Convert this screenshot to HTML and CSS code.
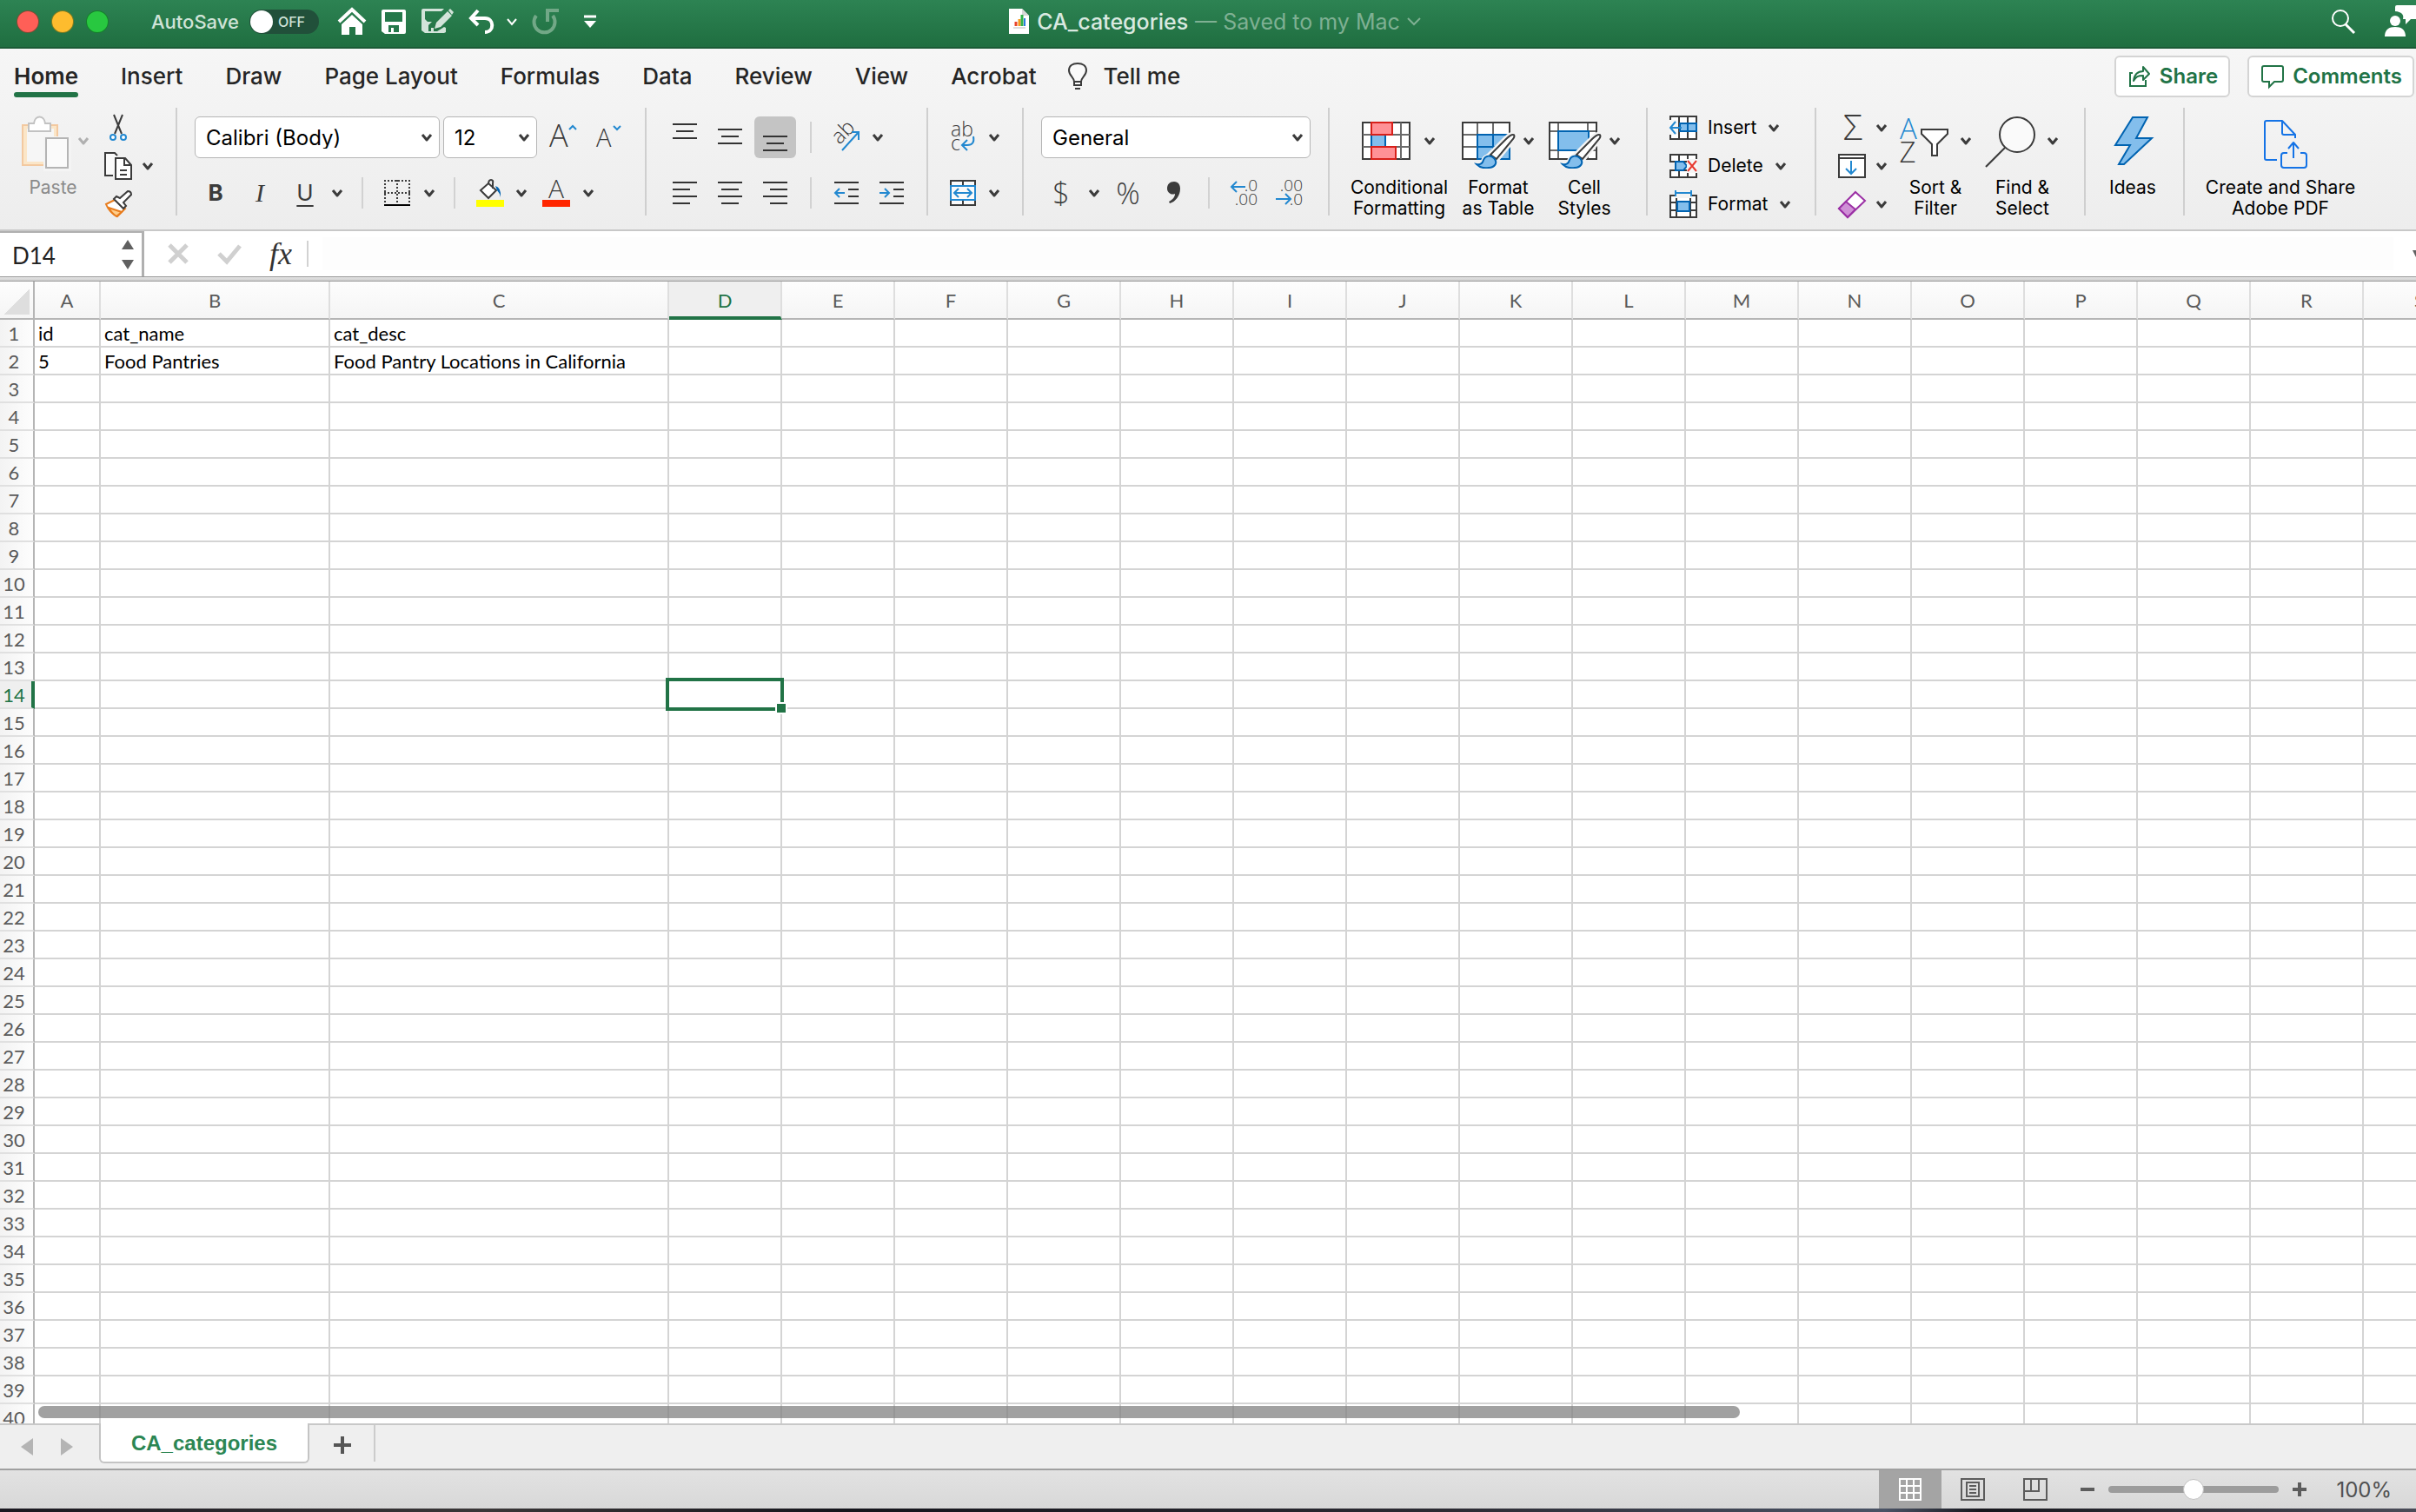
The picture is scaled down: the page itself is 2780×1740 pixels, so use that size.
FILE: index.html
```html
<!DOCTYPE html>
<html lang="en">
<head>
    <meta charset="UTF-8">
    <meta name="viewport" content="width=device-width, initial-scale=1.0">
    <title>CA_categories</title>
    <link rel="stylesheet" href="styles.css">
</head>
<body>
    <svg class="sprite" aria-hidden="true">
        <symbol id="chev" viewBox="0 0 16 16">
            <path d="M3 5l5 6 5-6" fill="none" stroke="currentColor" stroke-width="3" stroke-linejoin="round"/>
        </symbol>
        <symbol id="brush" viewBox="0 0 64 64">
            <path d="M60 25c2 0 2 2 0 5L41 53l-7-5 18-18q5-5 8-5z" fill="#f3f3f3" stroke="#f3f3f3" stroke-width="7"/>
            <path d="M18 59c5 1 7-1 8-5 2-5 8-6 12-2 5 5 1 11-6 11-6 1-11-1-14-4z" fill="#f3f3f3" stroke="#f3f3f3" stroke-width="5"/>
            <path d="M60 25c2 0 2 2 0 5L41 53l-7-5 18-18q5-5 8-5z" fill="#fff" stroke="#3b3b3b" stroke-width="2"/>
            <path d="M18 59c5 1 7-1 8-5 2-5 8-6 12-2 5 5 1 11-6 11-6 1-11-1-14-4z" fill="#83beec" stroke="#0063b1" stroke-width="2"/>
        </symbol>
    </svg>

    <header class="titlebar">
        <div class="title-left">
            <span class="light red"></span>
            <span class="light yellow"></span>
            <span class="light green"></span>
            <label class="autosave" for="autosave">AutoSave</label>
            <span class="switch"><input type="checkbox" id="autosave"><span class="knob"></span><span class="off">OFF</span></span>
            <button class="quick" aria-label="Home"><svg width="32" height="32" viewBox="0 0 32 32"><path d="M1 16L16 2l15 14" fill="none" stroke="#fff" stroke-width="4"/><path d="M4 19L16 8l12 11v12h-8v-9h-7v9H4z" fill="#fff"/></svg></button>
            <button class="quick save" aria-label="Save"><svg width="28" height="28" viewBox="0 0 28 28"><path d="M0 2q0-2 2-2h24q2 0 2 2v24q0 2-2 2H4l-4-3z" fill="#fff"/><path d="M4 3h20v11H4zM8 18h12v8h-6v-5h-3v5H8z" fill="#24784a"/></svg></button>
            <button class="quick" aria-label="Save as"><svg width="36" height="30" viewBox="0 0 36 30"><path d="M0 2q0-2 2-2h24l-3 3H4v9l3 3h5l-4 4v7h3v-4h3v4h4l8-5 2 1v5l-2 1H4l-4-3z" fill="#d3e4da"/><path d="M15 23l2-7L30 3l5 5-13 13zM31 2l2-2 4 4-2 3z" fill="#d3e4da"/></svg></button>
            <button class="quick undo" aria-label="Undo"><svg width="30" height="30" viewBox="0 0 30 30"><path d="M11 2L3 11l8 8M3 11h16c11 0 11 16 0 16" fill="none" stroke="#fff" stroke-width="4"/></svg></button>
            <button class="quick drop" aria-label="Undo history"><svg width="16" height="16" viewBox="0 0 16 16"><path d="M3 5l5 6 5-6" fill="none" stroke="#fff" stroke-width="2"/></svg></button>
            <button class="quick redo" aria-label="Redo"><svg width="30" height="30" viewBox="0 0 30 30"><path d="M4 8a12 12 0 1 0 19 0M17 15V2h13" fill="none" stroke="#72a887" stroke-width="4"/></svg></button>
            <button class="quick more" aria-label="Customize toolbar"><svg width="16" height="16" viewBox="0 0 16 16"><path d="M1 2h14" stroke="#fff" stroke-width="3"/><path d="M1 7h14l-7 8z" fill="#fff"/></svg></button>
        </div>
        <div class="title-center">
            <svg width="24" height="30" viewBox="0 0 24 30"><path d="M0 0h15l8 8v21H0z" fill="#fff"/><path d="M15 0v8h8z" fill="#d8d8d8"/><path d="M5 22h14" stroke="#bbb"/><path d="M8 20v-5" stroke="#e8452c" stroke-width="3"/><path d="M12 20v-8" stroke="#f39a1f" stroke-width="3"/><path d="M15 20V7" stroke="#31b24a" stroke-width="3"/><path d="M18 20v-9" stroke="#2b7de0" stroke-width="2"/></svg>
            <h1>CA_categories</h1>
            <span class="saved">— Saved to my Mac</span>
            <svg class="saved" width="16" height="16" viewBox="0 0 16 16"><path d="M1 4l7 7 7-7" fill="none" stroke="currentColor" stroke-width="2"/></svg>
        </div>
        <div class="title-right">
            <button class="quick" aria-label="Search"><svg width="28" height="30" viewBox="0 0 28 30"><circle cx="11" cy="11" r="9" fill="none" stroke="#fff" stroke-width="2"/><path d="M17 18l10 10" stroke="#fff" stroke-width="3"/></svg></button>
            <button class="quick" aria-label="Account"><svg width="36" height="38" viewBox="0 0 36 38"><path d="M12 2q0-2 2-2h22v16h-6l-6 6v-6h-3q2-8-9-9z" fill="#fff"/><circle cx="12" cy="18" r="6" fill="#fff"/><path d="M0 36c0-8 5-11 12-11s12 3 12 11z" fill="#fff"/></svg></button>
        </div>
    </header>

    <div class="ribbon">
        <nav class="tabs">
            <a class="tab current" href="#">Home</a>
            <a class="tab" href="#">Insert</a>
            <a class="tab" href="#">Draw</a>
            <a class="tab" href="#">Page Layout</a>
            <a class="tab" href="#">Formulas</a>
            <a class="tab" href="#">Data</a>
            <a class="tab" href="#">Review</a>
            <a class="tab" href="#">View</a>
            <a class="tab" href="#">Acrobat</a>
            <a class="tab tellme" href="#"><svg width="24" height="34" viewBox="0 0 24 34"><path d="M8 23c0-5-6-7-6-13C2 5 6 2 12 2s10 3 10 8c0 6-6 8-6 13v4H8zM8 23h8" fill="#fafafa" stroke="#3b3b3b" stroke-width="2"/><path d="M9 31h6" stroke="#3b3b3b" stroke-width="2"/></svg>Tell me</a>
            <div class="actions">
                <button class="action"><svg width="26" height="26" viewBox="0 0 26 26"><path d="M5 9H2v15h18v-7" fill="none" stroke="#217346" stroke-width="2"/><path d="M6 18c1-8 5-11 11-11V2l7 8-7 7v-5c-6 0-8 1-11 6z" fill="none" stroke="#217346" stroke-width="2" stroke-linejoin="round"/></svg>Share</button>
                <button class="action"><svg width="26" height="26" viewBox="0 0 26 26"><path d="M3 1h20q2 0 2 2v14q0 2-2 2h-8l-6 6v-6H3q-2 0-2-2V3q0-2 2-2z" fill="none" stroke="#217346" stroke-width="2"/></svg>Comments</button>
            </div>
        </nav>

        <div class="groups">
            <section class="group clipboard">
                <button class="big paste">
                    <span class="big-icon"><svg width="64" height="64" viewBox="0 0 64 64"><path d="M8 14h40v46H8z" fill="#fbe6c8" stroke="#f3c9a0" stroke-width="2"/><path d="M13 18h31v38H13z" fill="#f6f6f6"/><path d="M15 12h6c1-10 12-10 13 0h6v9H15z" fill="#fff" stroke="#c2c2c2" stroke-width="2"/><path d="M32 27h32v40H32z" fill="#f4f4f4"/><path d="M35 29h25v34H35z" fill="#fafafa" stroke="#b4b4b4" stroke-width="2"/></svg><svg class="chev"><use href="#chev"/></svg></span>
                    Paste
                </button>
                <div class="stack">
                    <button aria-label="Cut"><svg width="32" height="32" viewBox="0 0 32 32"><path d="M11 1l9 22M21 1l-9 22" stroke="#3b3b3b" stroke-width="2"/><circle cx="10" cy="27" r="3" fill="#fff" stroke="#2288d0" stroke-width="2"/><circle cx="22" cy="27" r="3" fill="#fff" stroke="#2288d0" stroke-width="2"/></svg></button>
                    <button aria-label="Copy"><svg width="32" height="32" viewBox="0 0 32 32"><path d="M10 27H1V1h11l3 3" fill="#fafafa" stroke="#3b3b3b" stroke-width="2"/><path d="M13 7h11l7 8v16H13z" fill="#fff" stroke="#3b3b3b" stroke-width="2"/><path d="M23 7v8h8M18 21h8M18 26h8" fill="none" stroke="#3b3b3b" stroke-width="2"/></svg><svg class="chev"><use href="#chev"/></svg></button>
                    <button aria-label="Format painter"><svg width="32" height="32" viewBox="0 0 32 32"><path d="M2 16l10-5 12 10-9 9q-9-4-13-14z" fill="#fff" stroke="#e87d1e" stroke-width="2"/><path d="M5 20l15 5-6 5q-6-4-9-10z" fill="#ffce8a" stroke="#e87d1e" stroke-width="2"/><path d="M11 10l3-3 4 2 9-8q4 0 4 4l-9 9 3 4-3 3z" fill="#fff" stroke="#3b3b3b" stroke-width="2"/></svg></button>
                </div>
            </section>
            <span class="divider"></span>

            <section class="group font">
                <div class="row-fields">
                    <span class="select family"><select aria-label="Font"><option>Calibri (Body)</option></select><svg class="chev"><use href="#chev"/></svg></span>
                    <span class="select size"><select aria-label="Font size"><option>12</option></select><svg class="chev"><use href="#chev"/></svg></span>
                    <button class="grow" aria-label="Increase font size"><svg width="32" height="36" viewBox="0 0 32 36"><text x="0" y="29" class="glyph" font-size="36">A</text><path d="M23 9l4-4 4 4" fill="none" stroke="#2288d0" stroke-width="2"/></svg></button>
                    <button class="shrink" aria-label="Decrease font size"><svg width="32" height="36" viewBox="0 0 32 36"><text x="2" y="29" class="glyph" font-size="29">A</text><path d="M22 5l4 4 4-4" fill="none" stroke="#2288d0" stroke-width="2"/></svg></button>
                </div>
                <div class="row row-font">
                    <button class="letter bold">B</button>
                    <button class="letter italic">I</button>
                    <button class="letter underline">U</button>
                    <button aria-label="Underline styles"><svg class="chev"><use href="#chev"/></svg></button>
                    <span class="thin"></span>
                    <button aria-label="Borders"><svg width="30" height="30" viewBox="0 0 30 30"><path d="M0 1h30M0 15h30M1 0v28M15 0v28M29 0v28" stroke="#3b3b3b" stroke-width="2" stroke-dasharray="2 2"/><path d="M0 29h30" stroke="#000" stroke-width="2"/></svg></button>
                    <button aria-label="Border styles"><svg class="chev"><use href="#chev"/></svg></button>
                    <span class="thin"></span>
                    <button aria-label="Fill color"><svg width="32" height="32" viewBox="0 0 32 32"><path d="M5 13L14 5l9 8-9 9z" fill="#fff" stroke="#3b3b3b" stroke-width="2"/><path d="M14 6q0-5 3-5t2 4v6" fill="none" stroke="#3b3b3b" stroke-width="2"/><path d="M22 8q7 2 6 13-1-5-4-8z" fill="#0063b1"/><path d="M0 24h32v8H0z" fill="#ffff00"/></svg></button>
                    <button aria-label="Fill colors"><svg class="chev"><use href="#chev"/></svg></button>
                    <button aria-label="Font color"><svg width="32" height="32" viewBox="0 0 32 32"><text x="16" y="22" class="glyph" font-size="30" text-anchor="middle">A</text><path d="M0 24h32v8H0z" fill="#ff2600"/></svg></button>
                    <button aria-label="Font colors"><svg class="chev"><use href="#chev"/></svg></button>
                </div>
            </section>
            <span class="divider"></span>

            <section class="group align">
                <div class="row row-vertical">
                    <button aria-label="Align top"><svg width="28" height="36" viewBox="0 0 28 36"><path d="M0 3h28M4 11h20M0 19h28" class="line"/></svg></button>
                    <button aria-label="Align middle"><svg width="28" height="36" viewBox="0 0 28 36"><path d="M0 9h28M4 17h20M0 25h28" class="line"/></svg></button>
                    <button class="pressed" aria-label="Align bottom"><svg width="28" height="36" viewBox="0 0 28 36"><path d="M0 17h28M4 25h20M0 33h28" class="line"/></svg></button>
                    <span class="thin"></span>
                    <button aria-label="Orientation"><svg width="34" height="34" viewBox="0 0 34 34"><text x="9" y="26" class="glyph" font-size="24" transform="rotate(-45 9 26)">ab</text><path d="M12 32L31 11M23 11h8v9" fill="none" stroke="#2288d0" stroke-width="2"/></svg></button>
                    <button aria-label="Orientations"><svg class="chev"><use href="#chev"/></svg></button>
                </div>
                <div class="row row-horizontal">
                    <button aria-label="Align left"><svg width="28" height="28" viewBox="0 0 28 28"><path d="M0 2h28M0 10h20M0 18h28M0 26h20" class="line"/></svg></button>
                    <button aria-label="Center"><svg width="28" height="28" viewBox="0 0 28 28"><path d="M0 2h28M4 10h20M0 18h28M4 26h20" class="line"/></svg></button>
                    <button aria-label="Align right"><svg width="28" height="28" viewBox="0 0 28 28"><path d="M0 2h28M8 10h20M0 18h28M8 26h20" class="line"/></svg></button>
                    <span class="thin"></span>
                    <button aria-label="Decrease indent"><svg width="28" height="28" viewBox="0 0 28 28"><path d="M0 2h28M16 10h12M16 18h12M0 26h28" class="line"/><path d="M12 14H2M6 9l-5 5 5 5" class="blue"/></svg></button>
                    <button aria-label="Increase indent"><svg width="28" height="28" viewBox="0 0 28 28"><path d="M0 2h28M16 10h12M16 18h12M0 26h28" class="line"/><path d="M0 14h10M6 9l5 5-5 5" class="blue"/></svg></button>
                </div>
            </section>
            <span class="divider"></span>

            <section class="group wrap">
                <div class="row row-wrap">
                    <button aria-label="Wrap text"><svg width="32" height="36" viewBox="0 0 32 36"><text x="2" y="17" class="glyph" font-size="23">ab</text><text x="2" y="33" class="glyph" font-size="23">c</text><path d="M28 17q2 10-7 10h-5M21 21l-6 6 6 6" class="blue"/></svg></button>
                    <button aria-label="Wrap options"><svg class="chev"><use href="#chev"/></svg></button>
                </div>
                <div class="row row-wrap">
                    <button aria-label="Merge and center"><svg width="30" height="32" viewBox="0 0 30 32"><path d="M1 2h28v28H1zM15 2v28" fill="#fafafa" stroke="#3b3b3b" stroke-width="2"/><path d="M1 8h28v16H1z" fill="#fafafa" stroke="#2288d0" stroke-width="2"/><path d="M5 16h20M10 11l-5 5 5 5M20 11l5 5-5 5" class="blue"/></svg></button>
                    <button aria-label="Merge options"><svg class="chev"><use href="#chev"/></svg></button>
                </div>
            </section>
            <span class="divider"></span>

            <section class="group number">
                <div class="row-fields">
                    <span class="select format"><select aria-label="Number format"><option>General</option></select><svg class="chev"><use href="#chev"/></svg></span>
                </div>
                <div class="row row-number">
                    <button class="symbol">$</button>
                    <button aria-label="Currencies"><svg class="chev"><use href="#chev"/></svg></button>
                    <button class="symbol">%</button>
                    <button aria-label="Comma style"><svg width="16" height="28" viewBox="0 0 16 28"><path d="M8 1c5 0 7 4 7 8 0 8-5 15-12 17l-1-2c4-2 7-5 7-9-5 2-9-2-9-6 0-5 3-8 8-8z" fill="#3b3b3b"/></svg></button>
                    <span class="thin"></span>
                    <button aria-label="Increase decimal"><svg width="34" height="34" viewBox="0 0 34 34"><text x="33" y="15" class="glyph" font-size="19" text-anchor="end">.0</text><text x="33" y="31" class="glyph" font-size="19" text-anchor="end">.00</text><path d="M19 10H3M9 4l-6 6 6 6" class="blue"/></svg></button>
                    <button aria-label="Decrease decimal"><svg width="34" height="34" viewBox="0 0 34 34"><text x="33" y="15" class="glyph" font-size="19" text-anchor="end">.00</text><text x="33" y="31" class="glyph" font-size="19" text-anchor="end">.0</text><path d="M2 24h17M13 18l6 6-6 6" class="blue"/></svg></button>
                </div>
            </section>
            <span class="divider"></span>

            <section class="group styles">
                <button class="big">
                    <span class="big-icon"><svg width="64" height="64" viewBox="0 0 64 64"><path d="M1 11h54v42H1z" fill="#fff" stroke="#3b3b3b" stroke-width="2"/><path d="M1 25h54M1 39h54M11 11v42M45 11v42" stroke="#6b6b6b" stroke-width="2"/><path d="M28 26h16v12H28z" fill="#fff"/><path d="M11 11h24v14H11zM11 39h28v14H11z" fill="#ff9196" stroke="#d8201a" stroke-width="2"/><path d="M11 26h16v12H11z" fill="#83beec"/><path d="M11 26v12M27 26v12" stroke="#0063b1" stroke-width="2"/></svg><svg class="chev"><use href="#chev"/></svg></span>
                    Conditional<br>Formatting
                </button>
                <button class="big">
                    <span class="big-icon"><svg width="64" height="64" viewBox="0 0 64 64"><path d="M2 11h54v42H2z" fill="#fff" stroke="#3b3b3b" stroke-width="2"/><path d="M19 25h37v28H19z" fill="#83beec"/><path d="M3 25h16M3 39h16M19 12v13M37 12v13" stroke="#6b6b6b" stroke-width="2"/><path d="M19 25h37v28H19zM19 39h37M37 25v28" fill="none" stroke="#0063b1" stroke-width="2"/><use href="#brush" width="64" height="64"/></svg><svg class="chev"><use href="#chev"/></svg></span>
                    Format<br>as Table
                </button>
                <button class="big">
                    <span class="big-icon"><svg width="64" height="64" viewBox="0 0 64 64"><path d="M3 11h54v42H3z" fill="#fff" stroke="#3b3b3b" stroke-width="2"/><path d="M4 21h52M4 43h52M13 12v40M47 12v40" stroke="#6b6b6b" stroke-width="2"/><path d="M13 21h35v22H13z" fill="#83beec" stroke="#0063b1" stroke-width="2"/><use href="#brush" width="64" height="64"/></svg><svg class="chev"><use href="#chev"/></svg></span>
                    Cell<br>Styles
                </button>
            </section>
            <span class="divider"></span>

            <section class="group cells">
                <div class="stack">
                    <button><svg width="32" height="32" viewBox="0 0 32 32"><path d="M1 3h30v26H1zM1 11h30M1 20h30M11 3v26M21 3v26" fill="#fff" stroke="#3b3b3b" stroke-width="2"/><path d="M12 11h19v9H12zM21 11v9" fill="#83beec" stroke="#0063b1" stroke-width="2"/><path d="M0 7h10v17H0z" fill="#f6f6f6"/><path d="M14 16H1M7 9l-6 7 6 7" class="blue"/></svg>Insert<svg class="chev"><use href="#chev"/></svg></button>
                    <button><svg width="32" height="32" viewBox="0 0 32 32"><path d="M1 3h30v8H1zM1 21h30v8H1zM11 3v8M21 3v8M11 21v8M21 21v8" fill="#fff" stroke="#3b3b3b" stroke-width="2"/><path d="M7 11h9l4 5-4 5H7z" fill="#83beec" stroke="#0063b1" stroke-width="2"/><path d="M20 8h12v16H20z" fill="#f6f6f6"/><path d="M21 10l10 12M31 10L21 22" stroke="#e83a30" stroke-width="2"/></svg>Delete<svg class="chev"><use href="#chev"/></svg></button>
                    <button><svg width="32" height="32" viewBox="0 0 32 32"><path d="M1 6h30v25H1zM1 14h30M1 23h30M8 6v25M24 6v25" fill="#fff" stroke="#3b3b3b" stroke-width="2"/><path d="M6 0h20v9H6z" fill="#f3f3f3"/><path d="M9 13h14v11H9z" fill="#83beec" stroke="#0063b1" stroke-width="2"/><path d="M7 0v7M25 0v7M7 3h18" class="blue"/></svg>Format<svg class="chev"><use href="#chev"/></svg></button>
                </div>
            </section>
            <span class="divider"></span>

            <section class="group editing">
                <div class="stack">
                    <button aria-label="AutoSum"><svg width="32" height="32" viewBox="0 0 32 32"><text x="17" y="30" class="glyph" font-size="40" text-anchor="middle">Σ</text></svg><svg class="chev"><use href="#chev"/></svg></button>
                    <button aria-label="Fill"><svg width="32" height="32" viewBox="0 0 32 32"><path d="M1 3h30v26H1zM1 7h30" fill="#fff" stroke="#3b3b3b" stroke-width="2"/><path d="M15 10v15M9 19l6 6 6-6" class="blue"/></svg><svg class="chev"><use href="#chev"/></svg></button>
                    <button aria-label="Clear"><svg width="32" height="32" viewBox="0 0 32 32"><path d="M20 2l11 10-20 19L1 21z" fill="#fff" stroke="#9b30a5" stroke-width="2"/><path d="M9 13l11 9-9 9L1 21z" fill="#cf8fd6" stroke="#9b30a5" stroke-width="2"/></svg><svg class="chev"><use href="#chev"/></svg></button>
                </div>
                <button class="big">
                    <span class="big-icon"><svg width="64" height="64" viewBox="0 0 64 64"><text x="12" y="30" class="glyph sort-a" font-size="33" text-anchor="middle">A</text><text x="11" y="57" class="glyph" font-size="33" text-anchor="middle">Z</text><path d="M27 19h30v5L45 36v13h-6V36L27 24z" fill="#fff" stroke="#3b3b3b" stroke-width="2"/></svg><svg class="chev"><use href="#chev"/></svg></span>
                    Sort &amp;<br>Filter
                </button>
                <button class="big find">
                    <span class="big-icon"><svg width="64" height="64" viewBox="0 0 64 64"><circle cx="37" cy="25" r="20" fill="#fafafa" stroke="#3b3b3b" stroke-width="2"/><path d="M23 40L1 62" stroke="#3b3b3b" stroke-width="2"/></svg><svg class="chev"><use href="#chev"/></svg></span>
                    Find &amp;<br>Select
                </button>
            </section>
            <span class="divider"></span>

            <section class="group ideas">
                <button class="big">
                    <span class="big-icon"><svg width="64" height="64" viewBox="0 0 64 64"><path d="M32 5h17L36 29h18L22 59h-6l13-22H12z" fill="#83beec" stroke="#0063b1" stroke-width="2"/></svg></span>
                    Ideas
                </button>
            </section>
            <span class="divider"></span>

            <section class="group adobe">
                <button class="big">
                    <span class="big-icon"><svg width="64" height="64" viewBox="0 0 64 64"><path d="M28 54H16q-2 0-2-2V11q0-2 2-2h18l15 16v4M34 9v14q0 2 2 2h13M40 46h-4q-3 0-3 3v11q0 3 3 3h23q3 0 3-3V49q0-3-3-3h-4M47 52V35M41 41l6-7 6 7" fill="none" stroke="#1473e6" stroke-width="2" stroke-linejoin="round"/></svg></span>
                    Create and Share<br>Adobe PDF
                </button>
            </section>
        </div>
    </div>

    <div class="formula-bar">
        <div class="name-box">
            <input type="text" value="D14" aria-label="Name box">
            <svg width="14" height="34" viewBox="0 0 14 34"><path d="M0 11L7 0l7 11zM0 23h14L7 34z" fill="#606060"/></svg>
        </div>
        <button aria-label="Cancel"><svg width="28" height="26" viewBox="0 0 28 26"><path d="M4 3l20 20M24 3L4 23" stroke="#d0d0d0" stroke-width="5"/></svg></button>
        <button aria-label="Enter"><svg width="28" height="26" viewBox="0 0 28 26"><path d="M2 13l9 9L26 4" fill="none" stroke="#d0d0d0" stroke-width="5"/></svg></button>
        <button class="fx">fx</button>
        <span class="thin"></span>
        <input class="formula" type="text" aria-label="Formula">
        <svg class="expand" width="4" height="8" viewBox="0 0 4 8"><path d="M0 0h4v8z" fill="#606060"/></svg>
    </div>

    <main class="grid-area">
        <table class="grid" id="grid"></table>
        <div class="scrollbar"></div>
    </main>

    <footer class="sheets">
        <button class="prev" aria-label="Previous sheet"><svg width="14" height="20" viewBox="0 0 14 20"><path d="M14 0v20L0 10z" fill="#b4b4b4"/></svg></button>
        <button class="next" aria-label="Next sheet"><svg width="14" height="20" viewBox="0 0 14 20"><path d="M0 0v20l14-10z" fill="#b4b4b4"/></svg></button>
        <button class="sheet">CA_categories</button>
        <button class="add" aria-label="Add sheet"><svg width="20" height="20" viewBox="0 0 20 20"><path d="M10 0v20M0 10h20" stroke="#555" stroke-width="4"/></svg></button>
    </footer>

    <div class="status">
        <button class="view active" aria-label="Normal view"><svg width="28" height="28" viewBox="0 0 28 28"><path d="M2 2h24v24H2zM10 2v24M18 2v24M2 10h24M2 18h24" fill="none" stroke="#fff" stroke-width="2"/></svg></button>
        <button class="view" aria-label="Page layout"><svg width="28" height="28" viewBox="0 0 28 28"><path d="M1 2h26v24H1zM7 6h14v16H7zM10 10h8M10 14h8M10 18h8" fill="none" stroke="#5c5c5c" stroke-width="2"/></svg></button>
        <button class="view" aria-label="Page break preview"><svg width="28" height="28" viewBox="0 0 28 28"><path d="M1 2h26v24H1zM1 16h17V2M9 2v14" fill="none" stroke="#5c5c5c" stroke-width="2"/></svg></button>
        <button class="zoom-step" aria-label="Zoom out"><svg width="16" height="16" viewBox="0 0 16 16"><path d="M0 8h16" stroke="#5c5c5c" stroke-width="4"/></svg></button>
        <input type="range" aria-label="Zoom" min="0" max="200" value="100">
        <button class="zoom-step" aria-label="Zoom in"><svg width="16" height="16" viewBox="0 0 16 16"><path d="M0 8h16M8 0v16" stroke="#5c5c5c" stroke-width="4"/></svg></button>
        <span class="percent">100%</span>
    </div>
    <div class="desktop"></div>

    <script src="script.js"></script>
</body>
</html>
```

FILE: styles.css
```css
* {
    box-sizing: border-box;
}

body {
    margin: 0;
    height: 100vh;
    display: flex;
    flex-direction: column;
    overflow: hidden;
    font-family: Inter, "Liberation Sans", sans-serif;
    font-size: 22px;
    line-height: 24px;
    color: #000;
    background-color: white;
}

button,
select,
input {
    font: inherit;
    color: inherit;
    margin: 0;
    padding: 0;
    border: 0;
    background: none;
}

svg {
    display: block;
    flex: none;
    overflow: visible;
}

.sprite {
    position: absolute;
    width: 0;
    height: 0;
    overflow: hidden;
}

.chev {
    width: 16px;
    height: 16px;
    color: #3b3b3b;
}

.glyph {
    font-family: "Open Sans", sans-serif;
    font-weight: 300;
    fill: #3b3b3b;
}

.sort-a {
    fill: #2288d0;
}

.line {
    stroke: #333;
    stroke-width: 2;
}

.blue {
    fill: none;
    stroke: #2288d0;
    stroke-width: 2;
}

/* title bar */
.titlebar {
    flex: none;
    display: grid;
    grid-template-columns: 1fr auto 1fr;
    height: 56px;
    padding-bottom: 4px;
    background: linear-gradient(#2d8353, #1f6e40);
    border-bottom: 2px solid #1b5a36;
}

.title-left,
.title-center,
.title-right {
    display: flex;
    align-items: center;
}

.title-left {
    padding-left: 19px;
}

.light {
    width: 26px;
    height: 26px;
    margin-right: 14px;
    border-radius: 50%;
    border: 1px solid rgba(0, 60, 20, 0.5);
}

.red {
    background-color: #ff5f57;
}

.yellow {
    background-color: #febc2e;
}

.green {
    background-color: #28c840;
}

.autosave {
    margin-left: 35px;
    margin-right: 12px;
    font-weight: 500;
    color: #cfe3d7;
}

.switch {
    position: relative;
    display: flex;
    align-items: center;
    width: 80px;
    height: 28px;
    margin-right: 22px;
    border-radius: 14px;
    background-color: #21503a;
}

.switch input {
    position: absolute;
    inset: 0;
    opacity: 0;
}

.knob {
    width: 26px;
    height: 26px;
    margin-left: 1px;
    border-radius: 50%;
    background-color: white;
}

.off {
    margin-left: 6px;
    font-size: 16px;
    font-weight: 500;
    color: #cfe3d7;
}

.quick {
    margin-right: 18px;
}

.quick.undo {
    margin-right: 12px;
}

.quick.drop {
    margin-right: 16px;
}

.quick.redo {
    margin-right: 28px;
}

.title-center {
    gap: 8px;
    padding-left: 16px;
    font-size: 25px;
    color: #d9e9e0;
}

.title-center h1 {
    margin: 0;
    font-size: 25px;
    font-weight: 500;
}

.title-center .saved {
    color: #7fb093;
}

.title-right {
    justify-content: flex-end;
    gap: 16px;
}

.title-right .quick:last-child {
    margin-right: 0;
}

/* ribbon */
.ribbon {
    flex: none;
    height: 210px;
    background: linear-gradient(#f6f6f6, #ededed);
    border-bottom: 2px solid #c8c8c8;
}

.tabs {
    display: flex;
    align-items: center;
    gap: 49px;
    height: 68px;
    padding: 0 2px 4px 16px;
}

.tab {
    position: relative;
    font-size: 26px;
    font-weight: 500;
    line-height: 48px;
    color: #252525;
    text-decoration: none;
}

.tab.current {
    font-weight: 600;
}

.tab.current::after {
    content: "";
    position: absolute;
    left: 0;
    right: 0;
    bottom: 0;
    height: 6px;
    border-radius: 3px;
    background-color: #217346;
}

.tellme {
    display: flex;
    align-items: center;
    gap: 18px;
    margin-left: -14px;
}

.actions {
    display: flex;
    gap: 20px;
    margin-left: auto;
}

.action {
    display: flex;
    align-items: center;
    gap: 10px;
    height: 48px;
    padding: 0 12px 0 14px;
    font-size: 24px;
    font-weight: 600;
    color: #217346;
    background-color: white;
    border: 2px solid #d4d4d4;
    border-radius: 6px;
}

.groups {
    display: flex;
    align-items: flex-start;
}

.divider {
    flex: none;
    width: 2px;
    height: 124px;
    background-color: #cfcfcf;
}

.thin {
    width: 2px;
    height: 36px;
    background-color: #d2d2d2;
}

.group {
    flex: none;
}

.clipboard,
.styles,
.editing,
.ideas,
.adobe {
    display: flex;
}

.font,
.align,
.wrap,
.number {
    display: flex;
    flex-direction: column;
    gap: 16px;
    padding-top: 10px;
}

.row,
.row-fields {
    height: 48px;
    align-items: center;
}

.row {
    display: grid;
    justify-items: center;
}

.row-fields {
    display: flex;
    gap: 4px;
}

.clipboard {
    padding: 0 24px 0 16px;
    gap: 14px;
}

.font {
    padding-left: 20px;
    padding-right: 26px;
}

.align {
    padding-left: 18px;
    padding-right: 14px;
}

.wrap {
    padding-left: 14px;
    padding-right: 22px;
}

.number {
    padding-left: 20px;
    padding-right: 20px;
}

.styles {
    padding: 0 26px 0 20px;
}

.cells {
    width: 192px;
    padding-left: 25px;
}

.editing {
    padding: 0 17px 0 25px;
}

.row-font {
    grid-template-columns: 48px 54px 50px 24px 34px 46px 28px 30px 52px 20px 60px 14px;
}

.row-vertical {
    grid-template-columns: 52px 52px 52px 30px 52px 20px;
}

.row-horizontal {
    grid-template-columns: 52px 52px 52px 30px 52px 52px;
}

.row-wrap {
    grid-template-columns: 52px 20px;
}

.row-number {
    grid-template-columns: 46px 30px 48px 58px 22px 58px 46px;
}

.select {
    position: relative;
}

.select select {
    appearance: none;
    width: 100%;
    height: 48px;
    padding-top: 2px;
    padding-left: 12px;
    font-size: 24px;
    background-color: white;
    border: 1px solid #b5b5b5;
    border-radius: 6px;
}

.select .chev {
    position: absolute;
    right: 7px;
    top: 16px;
    pointer-events: none;
}

.family {
    width: 282px;
}

.size {
    width: 108px;
}

.format {
    width: 310px;
}

.grow {
    margin-left: 10px;
}

.shrink {
    margin-left: 16px;
}

.letter {
    font-size: 26px;
    color: #3b3b3b;
}

.bold {
    font-weight: 700;
}

.italic {
    font-family: "Liberation Serif", serif;
    font-style: italic;
    font-size: 30px;
}

.underline {
    text-decoration: underline;
    text-underline-offset: 5px;
}

.symbol {
    font-family: "Open Sans", sans-serif;
    font-size: 34px;
    font-weight: 300;
    color: #3b3b3b;
}

.pressed {
    display: grid;
    place-items: center;
    width: 48px;
    height: 48px;
    border-radius: 6px;
    background-color: #c4c4c4;
}

.big {
    display: flex;
    flex-direction: column;
    align-items: center;
    padding-top: 6px;
    font-size: 21px;
    line-height: 24px;
    white-space: nowrap;
}

.big-icon {
    display: flex;
    align-items: center;
    gap: 6px;
    margin-bottom: 10px;
}

.paste {
    width: 90px;
    color: #8a8a8a;
}

.paste .chev {
    color: #b0b0b0;
}

.styles .big {
    width: 108px;
}

.styles .big:first-child {
    width: 120px;
}

.styles .big:last-child {
    width: 90px;
}

.editing .big {
    width: 92px;
    margin-left: 8px;
}

.editing .find {
    width: 108px;
    margin-left: 0;
}

.ideas .big {
    width: 108px;
    margin-right: 4px;
}

.adobe .big {
    width: 220px;
}

.stack button {
    display: flex;
    align-items: center;
    gap: 10px;
    height: 46px;
    margin-bottom: -2px;
    font-size: 21px;
}

.cells .stack button {
    gap: 12px;
}

/* formula bar */
.formula-bar {
    flex: none;
    display: flex;
    align-items: center;
    height: 58px;
    padding-bottom: 6px;
    background: linear-gradient(white 52px, #999 52px, #999 53px, #e4e4e4 53px, #d0d0d0 57px, #999 57px);
}

.name-box {
    display: flex;
    align-items: center;
    width: 166px;
    height: 52px;
    padding-left: 14px;
    border-top: 2px solid #b0b0b0;
    border-right: 3px solid #b0b0b0;
    font-family: Lato, sans-serif;
    font-size: 26px;
    color: #222;
}

.name-box input {
    width: 126px;
    padding-top: 2px;
}

.formula-bar button {
    width: 28px;
    margin-left: 25px;
}

.formula-bar button + button {
    margin-left: 31px;
}

.formula-bar .fx {
    font-family: "Liberation Serif", serif;
    font-style: italic;
    font-size: 36px;
    color: #333;
}

.formula-bar .thin {
    height: 30px;
    margin: 0 16px;
}

.formula {
    flex: 1;
    height: 38px;
    background-color: #fdfdfd;
}

.expand {
    margin-left: 22px;
}

/* grid */
.grid-area {
    flex: 1;
    min-height: 0;
    position: relative;
    overflow: hidden;
}

.grid {
    width: max-content;
    table-layout: fixed;
    border-collapse: separate;
    border-spacing: 0;
    font-family: Lato, "Noto Sans", sans-serif;
    font-size: 22px;
    line-height: 28px;
}

.col-head {
    width: 40px;
}

.col-a {
    width: 76px;
}

.col-b {
    width: 264px;
}

.col-c {
    width: 390px;
}

.col {
    width: 130px;
}

.grid th,
.grid td {
    height: 32px;
    padding: 2px 0 0;
    border-right: 2px solid #d4d4d4;
    border-bottom: 2px solid #d4d4d4;
}

.grid td {
    padding-left: 4px;
    text-align: left;
    white-space: nowrap;
}

.grid th {
    font-weight: 400;
    color: #5a5a5a;
}

.grid thead th {
    height: 44px;
    background: linear-gradient(#fdfdfd, #f5f5f5);
    border-right-color: #dedede;
    border-bottom-color: #b5b5b5;
}

.grid tbody th {
    padding-right: 6px;
    background: linear-gradient(to right, #f3f3f3, #fdfdfd);
    border-right-color: #b5b5b5;
    border-bottom-color: #e0e0e0;
}

.grid thead th:first-child {
    border-right-color: #b5b5b5;
}

.corner {
    margin: 6px 4px 4px auto;
    width: 30px;
    height: 30px;
    background: linear-gradient(to bottom right, transparent 50%, #dedede 50%);
}

.grid th.selected {
    color: #217346;
    background: #efefef;
}

.grid thead th.selected {
    padding-top: 4px;
    border-bottom: 4px solid #217346;
}

.grid tbody th.selected {
    padding-right: 4px;
    border-right: 4px solid #217346;
}

.grid td.active {
    position: relative;
}

.grid td.active::before {
    content: "";
    position: absolute;
    inset: -4px;
    border: 4px solid #217346;
}

.grid td.active::after {
    content: "";
    position: absolute;
    right: -6px;
    bottom: -6px;
    width: 10px;
    height: 10px;
    background-color: #217346;
    box-shadow: 0 0 0 2px white;
}

.scrollbar {
    position: absolute;
    left: 44px;
    right: 28%;
    bottom: 6px;
    height: 14px;
    border-radius: 7px;
    background-color: rgba(130, 130, 130, 0.75);
}

/* sheet tabs */
.sheets {
    flex: none;
    display: flex;
    height: 54px;
    padding-left: 24px;
    background: #efefef;
    border-top: 2px solid #c8c8c8;
    border-bottom: 2px solid #a0a0a0;
}

.sheets .next {
    margin: 0 30px 0 32px;
}

.sheet {
    width: 242px;
    height: 46px;
    margin-top: -2px;
    padding-top: 2px;
    font-family: "Liberation Sans", sans-serif;
    font-size: 24px;
    font-weight: 700;
    color: #2c8653;
    background-color: white;
    border: 2px solid #c4c4c4;
    border-top: 0;
    border-radius: 0 0 6px 6px;
}

.add {
    height: 42px;
    padding: 4px 26px 0 28px;
    border-right: 2px solid #ccc;
}

/* status bar */
.status {
    flex: none;
    display: flex;
    align-items: center;
    justify-content: flex-end;
    height: 44px;
    padding-right: 28px;
    background: linear-gradient(#e2e2e2, #d8d8d8);
}

.view {
    display: grid;
    place-items: center;
    width: 72px;
    height: 44px;
}

.view.active {
    background-color: #a4a4a4;
}

.zoom-step {
    margin: 0 16px;
}

.status input {
    appearance: none;
    width: 196px;
    height: 24px;
}

.status input::-webkit-slider-runnable-track {
    height: 8px;
    border-radius: 4px;
    background-color: #9c9c9c;
}

.status input::-webkit-slider-thumb {
    appearance: none;
    width: 24px;
    height: 24px;
    margin-top: -8px;
    border-radius: 50%;
    background-color: white;
    border: 1px solid #c0c0c0;
}

.percent {
    margin-left: 18px;
    padding-top: 2px;
    font-size: 24px;
    color: #505050;
}

.desktop {
    flex: none;
    height: 4px;
    background: linear-gradient(to right, #1a1820, #3a3738 20%, #15151c 35%, #2c2b33 60%, #4a5365 78%, #16161c 82%, #4a4c58);
}
```

FILE: script.js
```js
var columns = "ABCDEFGHIJKLMNOPQRS".split("");
var rowCount = 40;
var selected = { column: "D", row: 14 };

var cells = {
    A1: "id",
    B1: "cat_name",
    C1: "cat_desc",
    A2: "5",
    B2: "Food Pantries",
    C2: "Food Pantry Locations in California"
};

function buildGrid() {
    var html = '<colgroup><col class="col-head"><col class="col-a"><col class="col-b"><col class="col-c">';
    for (var i = 3; i < columns.length; i++) {
        html += '<col class="col">';
    }
    html += '</colgroup><thead><tr><th><div class="corner"></div></th>';

    columns.forEach(function (name) {
        html += '<th scope="col"' + (name === selected.column ? ' class="selected"' : '') + '>' + name + '</th>';
    });
    html += '</tr></thead><tbody>';

    for (var row = 1; row <= rowCount; row++) {
        html += '<tr><th scope="row"' + (row === selected.row ? ' class="selected"' : '') + '>' + row + '</th>';
        columns.forEach(function (name) {
            var active = name === selected.column && row === selected.row;
            html += '<td' + (active ? ' class="active"' : '') + '>' + (cells[name + row] || '') + '</td>';
        });
        html += '</tr>';
    }

    document.getElementById("grid").innerHTML = html + '</tbody>';
}

buildGrid();
```
